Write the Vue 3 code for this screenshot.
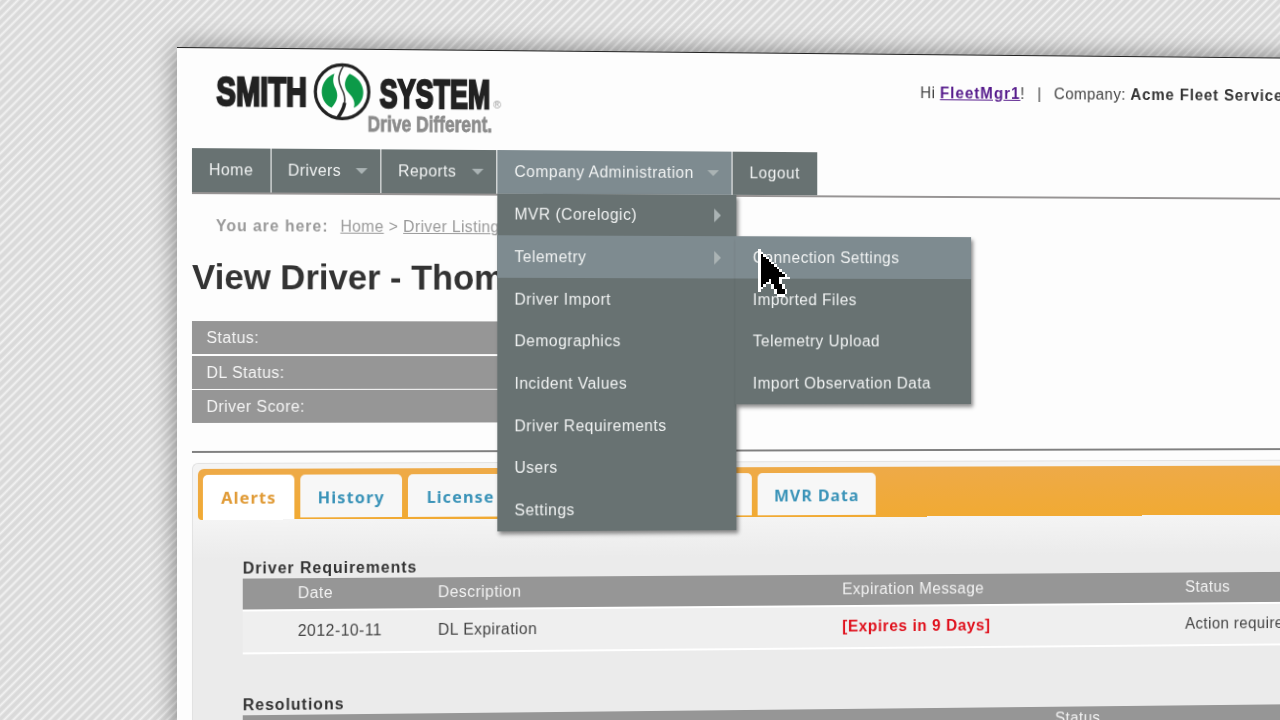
<script setup>
const adminItems = [
  { label: 'MVR (Corelogic)', arrow: true },
  { label: 'Telemetry', arrow: true, active: true },
  { label: 'Driver Import' },
  { label: 'Demographics' },
  { label: 'Incident Values' },
  { label: 'Driver Requirements' },
  { label: 'Users' },
  { label: 'Settings' }
]

const telemetryItems = [
  { label: 'Connection Settings', active: true },
  { label: 'Imported Files' },
  { label: 'Telemetry Upload' },
  { label: 'Import Observation Data' }
]

const statusRows = ['Status:', 'DL Status:', 'Driver Score:']

// Pointer bitmap: o = outline, x = fill
const pointer = [
  'o',
  'oo',
  'oxo',
  'oxxo',
  'oxxxo',
  'oxxxxo',
  'oxxxxxo',
  'oxxxxxxo',
  'oxxxxxxxo',
  'oxxxxxxxxo',
  'oxxxxxxxxxo',
  'oxxxxxxxoooo',
  'oxxxoxxxo',
  'oxxooxxxo',
  'oxo  oxxxo',
  'oo   oxxxo',
  'o     oxxxo',
  '      oxxxo',
  '       ooo'
]
const pixels = pointer.flatMap((row, y) =>
  [...row].map((c, x) => ({ c, x, y })).filter((p) => p.c !== ' ')
)
</script>

<template>
  <div class="scene">
    <div class="page">
      <header class="header">
        <svg class="logo" viewBox="0 0 300 80" preserveAspectRatio="none">
          <g class="logo-name">
            <text x="6.5" y="46.5" textLength="90" lengthAdjust="spacingAndGlyphs">SMITH</text>
            <text x="169" y="47.5" textLength="111" lengthAdjust="spacingAndGlyphs">SYSTEM</text>
          </g>
          <circle cx="131.5" cy="32" r="26.7" fill="#fff" stroke="#222" stroke-width="3.2" />
          <path d="M124 14C108 20 107 41 121 48C127 41 128 36 125 29C122 23 122 19 124 14Z" fill="#0c9a48" />
          <path d="M139 14C156 21 157 41 143 48C145 43 143 38 138 33C132 27 134 19 139 14Z" fill="#0c9a48" />
          <path d="M133 6C126 17 128 23 131 29C135 36 137 45 127 58" fill="none" stroke="#444" stroke-width="1.6" />
          <path d="M134 43Q133 50 127 58" fill="none" stroke="#222" stroke-width="3.5" />
          <text class="logo-tag" x="157" y="71" textLength="125" lengthAdjust="spacingAndGlyphs">Drive Different.</text>
          <text class="logo-reg" x="283" y="47">®</text>
        </svg>
        <div class="user-info">
          <span>Hi <a class="user-link">FleetMgr1</a>!</span>
          <span class="bar">|</span>
          <span>Company: <b>Acme Fleet Services</b></span>
        </div>
      </header>

      <nav class="nav">
        <div class="nav-item home">Home</div>
        <div class="nav-item drivers">Drivers<i class="caret-down"></i></div>
        <div class="nav-item reports">Reports<i class="caret-down"></i></div>
        <div class="nav-item admin">
          Company Administration<i class="caret-down"></i>
          <div class="menu">
            <div
              v-for="item in adminItems"
              :key="item.label"
              class="menu-item"
              :class="{ active: item.active }"
            >
              {{ item.label }}
              <i v-if="item.arrow" class="caret-right"></i>
              <div v-if="item.active" class="menu submenu">
                <div
                  v-for="sub in telemetryItems"
                  :key="sub.label"
                  class="menu-item"
                  :class="{ active: sub.active }"
                >
                  {{ sub.label }}
                </div>
              </div>
            </div>
          </div>
        </div>
        <div class="nav-item logout">Logout</div>
      </nav>

      <div class="breadcrumb">
        <b>You are here:</b><a>Home</a> &gt; <a>Driver Listing</a>
      </div>
      <h1 class="title">View Driver - Thom</h1>

      <div class="status-list">
        <div v-for="row in statusRows" :key="row" class="status-row">{{ row }}</div>
      </div>
      <div class="divider"></div>

      <div class="tab-box">
        <div class="tabs">
          <div class="tab current">Alerts</div>
          <div class="tab history">History</div>
          <div class="tab license">License</div>
          <div class="tab mvr">MVR Data</div>
        </div>
        <div class="panel">
          <h2 class="section-title">Driver Requirements</h2>
          <div class="row head">
            <span>Date</span>
            <span>Description</span>
            <span>Expiration Message</span>
            <span>Status</span>
          </div>
          <div class="row data">
            <span>2012-10-11</span>
            <span>DL Expiration</span>
            <span class="expires">[Expires in 9 Days]</span>
            <span>Action required</span>
          </div>
          <h2 class="section-title resolutions">Resolutions</h2>
          <div class="row head second"><span>Status</span></div>
        </div>
      </div>
    </div>

    <svg class="pointer" viewBox="0 0 12 19" preserveAspectRatio="none" shape-rendering="crispEdges">
      <rect
        v-for="p in pixels"
        :key="`${p.x}-${p.y}`"
        :x="p.x"
        :y="p.y"
        width="1"
        height="1"
        :fill="p.c === 'x' ? '#000' : '#fff'"
      />
    </svg>
  </div>
</template>

<style>
body {
  margin: 0;
  overflow: hidden;
}
</style>

<style scoped>
.scene {
  position: relative;
  box-sizing: border-box;
  width: 1280px;
  height: 720px;
  padding: 47px 0 0 177px;
  overflow: hidden;
  background: repeating-linear-gradient(135deg, #f2f2f2 0, #dadada 2px, #dadada 4.4px, #f2f2f2 6.4px);
  font-family: "Liberation Sans", Arial, sans-serif;
  font-size: 16px;
  letter-spacing: 0.45px;
  color: #444;
}

/* The sheet is tilted slightly away on its right side */
.page {
  box-sizing: border-box;
  width: 1300px;
  height: 760px;
  border-top: 1.5px solid #222;
  background: #fdfdfd;
  box-shadow: 0 0 24px rgba(0, 0, 0, 0.45);
  transform: perspective(2000px) rotateY(3.44deg);
  transform-origin: 0 318px;
}

.header {
  display: flex;
  align-items: flex-start;
  height: 100px;
  padding-left: 33px;
}

.logo {
  width: 304px;
  height: 81px;
  margin-top: 10px;
}

.logo-name {
  font-weight: bold;
  font-size: 41px;
  letter-spacing: 0;
  fill: #222;
  stroke: #222;
  stroke-width: 2.4px;
}

.logo-tag {
  font-weight: bold;
  font-size: 22px;
  letter-spacing: 0;
  fill: #8c8c8c;
  stroke: #8c8c8c;
  stroke-width: 0.8px;
}

.logo-reg {
  font-size: 11px;
  fill: #999;
}

.user-info {
  display: flex;
  gap: 13px;
  margin: 29.5px 0 0 424.5px;
  letter-spacing: 0.4px;
  white-space: nowrap;
}

.user-info b {
  color: #333;
  letter-spacing: 0.9px;
}

.user-link {
  color: #551a8b;
  font-weight: bold;
  letter-spacing: 1px;
  text-decoration: underline;
}

.nav {
  display: flex;
  height: 43.5px;
  margin-left: 15px;
  border-bottom: 2px solid #979494;
}

.nav-item {
  position: relative;
  box-sizing: border-box;
  display: flex;
  align-items: center;
  justify-content: space-between;
  padding: 0 13px 0 17px;
  border-right: 1.5px solid #fff;
  background: #687272;
  color: #f1f3f3;
  white-space: nowrap;
}

.home {
  width: 79.5px;
}

.drivers {
  width: 111.5px;
}

.reports {
  width: 117.5px;
}

.admin {
  width: 242px;
  padding-left: 18px;
  background: #7e8b90;
  letter-spacing: 0.5px;
}

.logout {
  width: 88px;
  padding-left: 18px;
  border-right: 0;
  letter-spacing: 0.6px;
}

.caret-down {
  border: 6.5px solid transparent;
  border-top-color: #aab3b4;
  border-bottom: 0;
}

.caret-right {
  border: 7px solid transparent;
  border-left-color: #aab3b4;
  border-right: 0;
}

.menu {
  position: absolute;
  z-index: 2;
  top: 43.5px;
  left: 0;
  width: 246px;
  background: #687272;
  box-shadow: 2px 3px 4px rgba(0, 0, 0, 0.45);
}

.submenu {
  top: 0;
  left: 245.5px;
}

.menu-item {
  position: relative;
  box-sizing: border-box;
  display: flex;
  align-items: center;
  justify-content: space-between;
  height: 42.7px;
  padding: 1px 16px 0 18px;
}

.menu-item.active {
  background: #7e8b90;
}

.breadcrumb {
  height: 18px;
  padding: 23px 0 0 39px;
  color: #999;
  line-height: 18px;
}

.breadcrumb b {
  margin-right: 12px;
  letter-spacing: 0.95px;
}

.breadcrumb a {
  text-decoration: underline;
  letter-spacing: 0.35px;
}

.title {
  margin: 21.5px 0 0 15px;
  font-size: 35px;
  line-height: 42px;
  letter-spacing: 0;
  color: #333;
}

.status-list {
  display: flex;
  flex-direction: column;
  gap: 1.5px;
  width: 480px;
  margin: 23px 0 0 15px;
}

.status-row {
  height: 33px;
  padding-left: 14.5px;
  background: #969696;
  color: #f5f5f5;
  line-height: 33px;
}

.divider {
  height: 2px;
  margin: 28px 0 0 15px;
  background: #808080;
}

.tab-box {
  margin: 9.5px 0 0 15px;
  border-top: 1px solid #e2e2e2;
  border-left: 1px solid #e2e2e2;
  border-radius: 6px 0 0 0;
  background: #f4f4f4;
}

.tabs {
  display: flex;
  gap: 6px;
  box-sizing: border-box;
  height: 51px;
  margin: 5px 0 0 5px;
  padding: 6px 0 0 5px;
  border-radius: 6px 0 0 4px;
  background: linear-gradient(#eeaa48, #f1aa33);
}

.tab {
  box-sizing: border-box;
  height: 43.5px;
  border-radius: 5px 5px 0 0;
  background: #f7f7f7;
  color: #3a93b8;
  font-family: "Noto Sans", "Open Sans", sans-serif;
  font-weight: 700;
  font-size: 16.5px;
  line-height: 45.5px;
  letter-spacing: 1.1px;
  text-align: center;
}

.tab.current {
  width: 92px;
  height: 45px;
  background: #fff;
  color: #e09a35;
}

.history {
  width: 103px;
}

.license {
  width: 353px;
  padding-left: 19px;
  text-align: left;
}

.mvr {
  width: 123px;
}

.panel {
  height: 300px;
  padding: 39px 0 0 50px;
  background: linear-gradient(#f4f4f4, #ebebeb 40px);
}

.section-title {
  margin: 0;
  font-size: 16px;
  line-height: 20px;
  letter-spacing: 1px;
  color: #333;
}

.row {
  display: grid;
  grid-template-columns: 142px 416.5px 361.5px 1fr;
  align-items: center;
  padding-left: 55.5px;
  white-space: nowrap;
}

.head {
  height: 31px;
  border-bottom: 2px solid #fff;
  background: #969696;
  color: #f2f2f2;
}

.data {
  height: 41px;
  border-bottom: 2.5px solid #fff;
  background: #efefef;
}

.expires {
  color: #e0101c;
  font-weight: bold;
  letter-spacing: 0.65px;
}

.resolutions {
  margin-top: 41px;
}

.second {
  padding-left: 837.5px;
  height: 24px;
}

.pointer {
  position: absolute;
  z-index: 5;
  top: 249px;
  left: 758px;
  width: 32px;
  height: 48px;
}
</style>
